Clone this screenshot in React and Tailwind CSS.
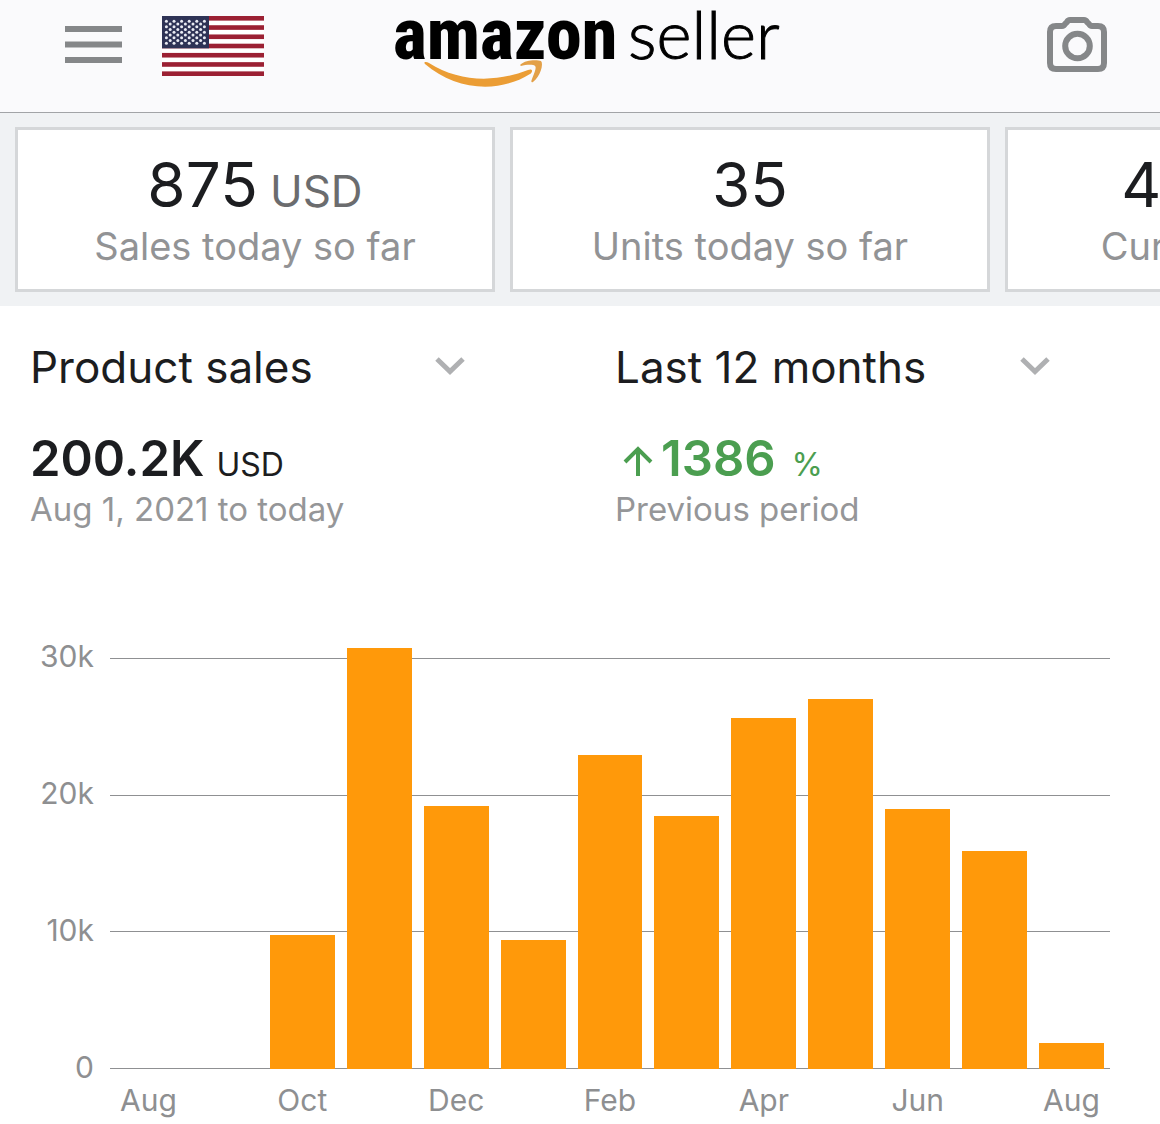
import React, { useState } from 'react';

const cards = [
  { value: '875', unit: 'USD', label: 'Sales today so far' },
  { value: '35', label: 'Units today so far' },
  { value: '4.11K', unit: 'USD', label: 'Current balance' },
];

// product sales per month, in thousands
const sales = [
  { month: 'Aug', value: 0 },
  { month: 'Sep', value: 0 },
  { month: 'Oct', value: 9.8 },
  { month: 'Nov', value: 30.7 },
  { month: 'Dec', value: 19.2 },
  { month: 'Jan', value: 9.4 },
  { month: 'Feb', value: 22.9 },
  { month: 'Mar', value: 18.5 },
  { month: 'Apr', value: 25.6 },
  { month: 'May', value: 27 },
  { month: 'Jun', value: 19 },
  { month: 'Jul', value: 15.9 },
  { month: 'Aug', value: 1.9 },
];

const ticks = ['30k', '20k', '10k', '0'];
const maxTick = 30;

const stripes = [0, 2, 4, 6, 8, 10, 12];
const starRows = [0, 1, 2, 3, 4, 5, 6, 7, 8];

const Flag = () => (
  <svg className="h-[60px] w-[102px]" viewBox="0 0 102 60" preserveAspectRatio="none" aria-hidden="true">
    <rect width="102" height="60" fill="#fff" />
    {stripes.map((i) => (
      <rect key={i} y={(i * 60) / 13} width="102" height={60 / 13} fill="#9b2033" />
    ))}
    <rect width="47" height="32.3" fill="#2e3356" />
    {starRows.map((row) =>
      Array.from({ length: row % 2 ? 5 : 6 }, (_, col) => (
        <circle
          key={`${row}-${col}`}
          cx={4.4 + col * 7.6 + (row % 2 ? 3.8 : 0)}
          cy={5.2 + row * 2.75}
          r="1.5"
          fill="#e9ebf3"
        />
      ))
    )}
  </svg>
);

const Logo = () => (
  <svg className="h-[90px] w-[384px] overflow-visible" viewBox="0 0 384 90" role="img" aria-label="amazon seller">
    <text x="-1" y="59" className="fill-black font-['Roboto_Condensed','Roboto',sans-serif] text-[72px] font-extrabold">
      amazon
    </text>
    <text
      x="234"
      y="59"
      className="fill-black stroke-black stroke-1 font-['Lato',sans-serif] text-[67px] font-light"
    >
      seller
    </text>
    <path
      d="M31 64 C29 62 32 61 35 63 C65 82 101 83 134 70 C139 68 139 72 136 74 C104 94 61 90 31 64 Z"
      fill="#eb9d35"
    />
    <path
      d="M126 65 C132 59 144 60 147 61 C150 64 146 77 139 82 C137 83 137 81 138 79 C140 74 143 67 141 66 C139 64 131 65 127 66 Z"
      fill="#e3a048"
    />
  </svg>
);

const Header = () => (
  <header className="grid h-[113px] grid-cols-[1fr_auto_1fr] items-start border-b border-[#a2a4a7] bg-[#fafafc] pl-16 pr-[52px]">
    <div className="flex items-center gap-10 pt-4">
      <button type="button" aria-label="Menu">
        <svg className="h-10 w-[58px]" viewBox="0 0 58 40" fill="#858789">
          <rect x="1" y="0" width="57" height="6" />
          <rect x="1" y="15.5" width="57" height="6" />
          <rect x="1" y="31" width="57" height="6" />
        </svg>
      </button>
      <button type="button" aria-label="Marketplace: United States">
        <Flag />
      </button>
    </div>
    <Logo />
    <div className="flex justify-end pt-4">
      <button type="button" aria-label="Scan a product">
        <svg className="h-[58px] w-[62px]" viewBox="0 0 62 58" fill="none" stroke="#858789" strokeWidth="6">
          <path d="M10 10 H16 Q18 10 19 8 L21 6 Q22 4 24 4 H38 Q40 4 41 6 L43 8 Q44 10 46 10 H52 Q58 10 58 16 V47 Q58 53 52 53 H10 Q4 53 4 47 V16 Q4 10 10 10 Z" />
          <circle cx="31.5" cy="30" r="12.3" />
        </svg>
      </button>
    </div>
  </header>
);

const StatCard = ({ value, unit, label }) => (
  <div className="flex w-[480px] shrink-0 flex-col items-center border-[3px] border-[#d5d7d9] bg-white pb-4 pt-5">
    <p className="flex items-baseline gap-3 text-[62px] leading-[70px] text-[#1c1d20]">
      {value}
      {unit && <span className="text-[44px] leading-none text-[#6b6c6e]">{unit}</span>}
    </p>
    <p className="text-[38px] leading-[53px] text-[#929395]">{label}</p>
  </div>
);

const Picker = ({ label, options }) => {
  const [selected, setSelected] = useState(options[0]);

  return (
    <div className="relative">
      <select
        aria-label={label}
        value={selected}
        onChange={(e) => setSelected(e.target.value)}
        className="h-[60px] w-full appearance-none bg-transparent text-[44px] leading-[60px] text-[#1c1d20]"
      >
        {options.map((option) => (
          <option key={option}>{option}</option>
        ))}
      </select>
      <svg
        className="pointer-events-none absolute right-0 top-5 h-[18px] w-[30px]"
        viewBox="0 0 30 18"
        fill="none"
        stroke="#afb0b2"
        strokeWidth="5"
      >
        <path d="M2 2 L15 14.5 L28 2" />
      </svg>
    </div>
  );
};

const Chart = () => (
  <section aria-label="Product sales by month" className="mt-[129px] pl-8 pr-[50px] text-[30px] text-[#8e8f91]">
    <div className="flex h-[411px]">
      <div className="flex w-[78px] flex-col justify-between pr-4 text-right">
        {ticks.map((tick) => (
          <div key={tick} className="flex h-0 items-center justify-end">
            <span className="pb-1">{tick}</span>
          </div>
        ))}
      </div>
      <div className="relative flex flex-1 items-end">
        <div className="absolute inset-0 flex flex-col justify-between">
          {ticks.map((tick) => (
            <div key={tick} className="h-px bg-[#8f9092]" />
          ))}
        </div>
        {sales.map(({ value }, i) => (
          <div key={i} className="relative flex h-full flex-1 items-end px-[6px]">
            <div className="w-full bg-[#ff990a]" style={{ height: `${(value / maxTick) * 100}%` }} />
          </div>
        ))}
      </div>
    </div>
    <div className="flex pl-[78px] pt-2 leading-[46px]">
      {sales.map(({ month }, i) => (
        <div key={i} className="flex w-0 flex-1 justify-center">
          {i % 2 === 0 && <span>{month}</span>}
        </div>
      ))}
    </div>
  </section>
);

const App = () => (
  <div className="overflow-hidden bg-white font-['Inter',sans-serif]">
    <Header />
    <div className="flex gap-[15px] overflow-hidden bg-[#f0f2f4] px-[15px] py-[14px]">
      {cards.map((card) => (
        <StatCard key={card.label} {...card} />
      ))}
    </div>
    <main>
      <div className="grid grid-cols-2 gap-[150px] pl-[30px] pr-[110px] pt-[31px]">
        <div>
          <Picker label="Metric" options={['Product sales', 'Units sold']} />
          <p className="mt-8 flex items-baseline gap-3 text-[49px] font-semibold leading-[60px] text-[#1c1d20]">
            200.2K
            <span className="text-[32px] font-normal leading-none">USD</span>
          </p>
          <p className="text-[33px] leading-10 text-[#959698]">Aug 1, 2021 to today</p>
        </div>
        <div>
          <Picker label="Period" options={['Last 12 months', 'Last 30 days']} />
          <p className="mt-8 flex items-baseline text-[49px] font-semibold leading-[60px] text-[#4b9e50]">
            <svg className="ml-2 mr-2 h-[30px] w-[30px]" viewBox="0 0 30 30" fill="none" stroke="currentColor" strokeWidth="4">
              <path d="M15 30 V4 M2 16 L15 3 L28 16" />
            </svg>
            1386
            <span className="ml-4 text-[32px] font-normal leading-none">%</span>
          </p>
          <p className="text-[33px] leading-10 text-[#959698]">Previous period</p>
        </div>
      </div>
      <Chart />
    </main>
  </div>
);

export default App;
